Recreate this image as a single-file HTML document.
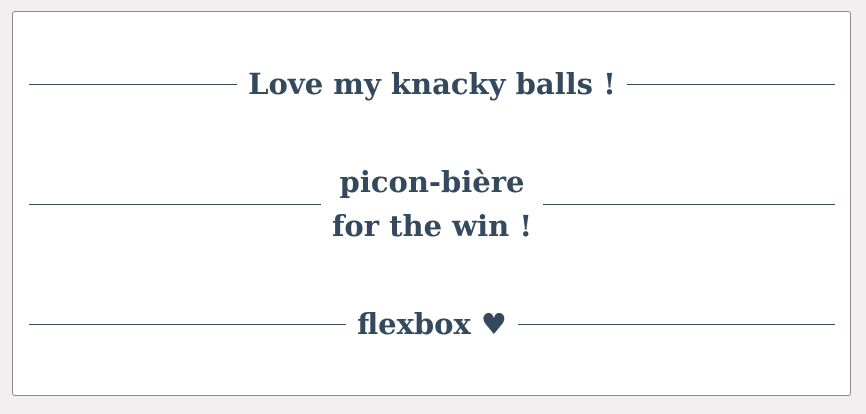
<!DOCTYPE html>
<html><head><style>
html,body{margin:0;padding:0;background:#f3eff0;width:866px;height:414px;overflow:hidden}
.box{position:absolute;left:12px;top:11px;width:837px;height:383px;background:#fff;border:1px solid #8a8a8a;border-radius:3px}
.row{position:absolute;left:29px;width:806px;display:flex;align-items:center;color:#34495e;font-family:"DejaVu Serif",serif;font-weight:bold;font-size:29px;letter-spacing:0px;line-height:44px;text-align:center}
.row .l{flex:1;height:1px;background:#34495e}
.row .t{padding:0 11px}
</style></head><body>
<div class="box"></div>
<div class="row" style="top:62px"><div class="l"></div><div class="t">Love my knacky balls !</div><div class="l"></div></div>
<div class="row" style="top:160px"><div class="l"></div><div class="t">picon-bière<br>for the win !</div><div class="l"></div></div>
<div class="row" style="top:302px"><div class="l"></div><div class="t">flexbox ♥</div><div class="l"></div></div>
</body></html>
